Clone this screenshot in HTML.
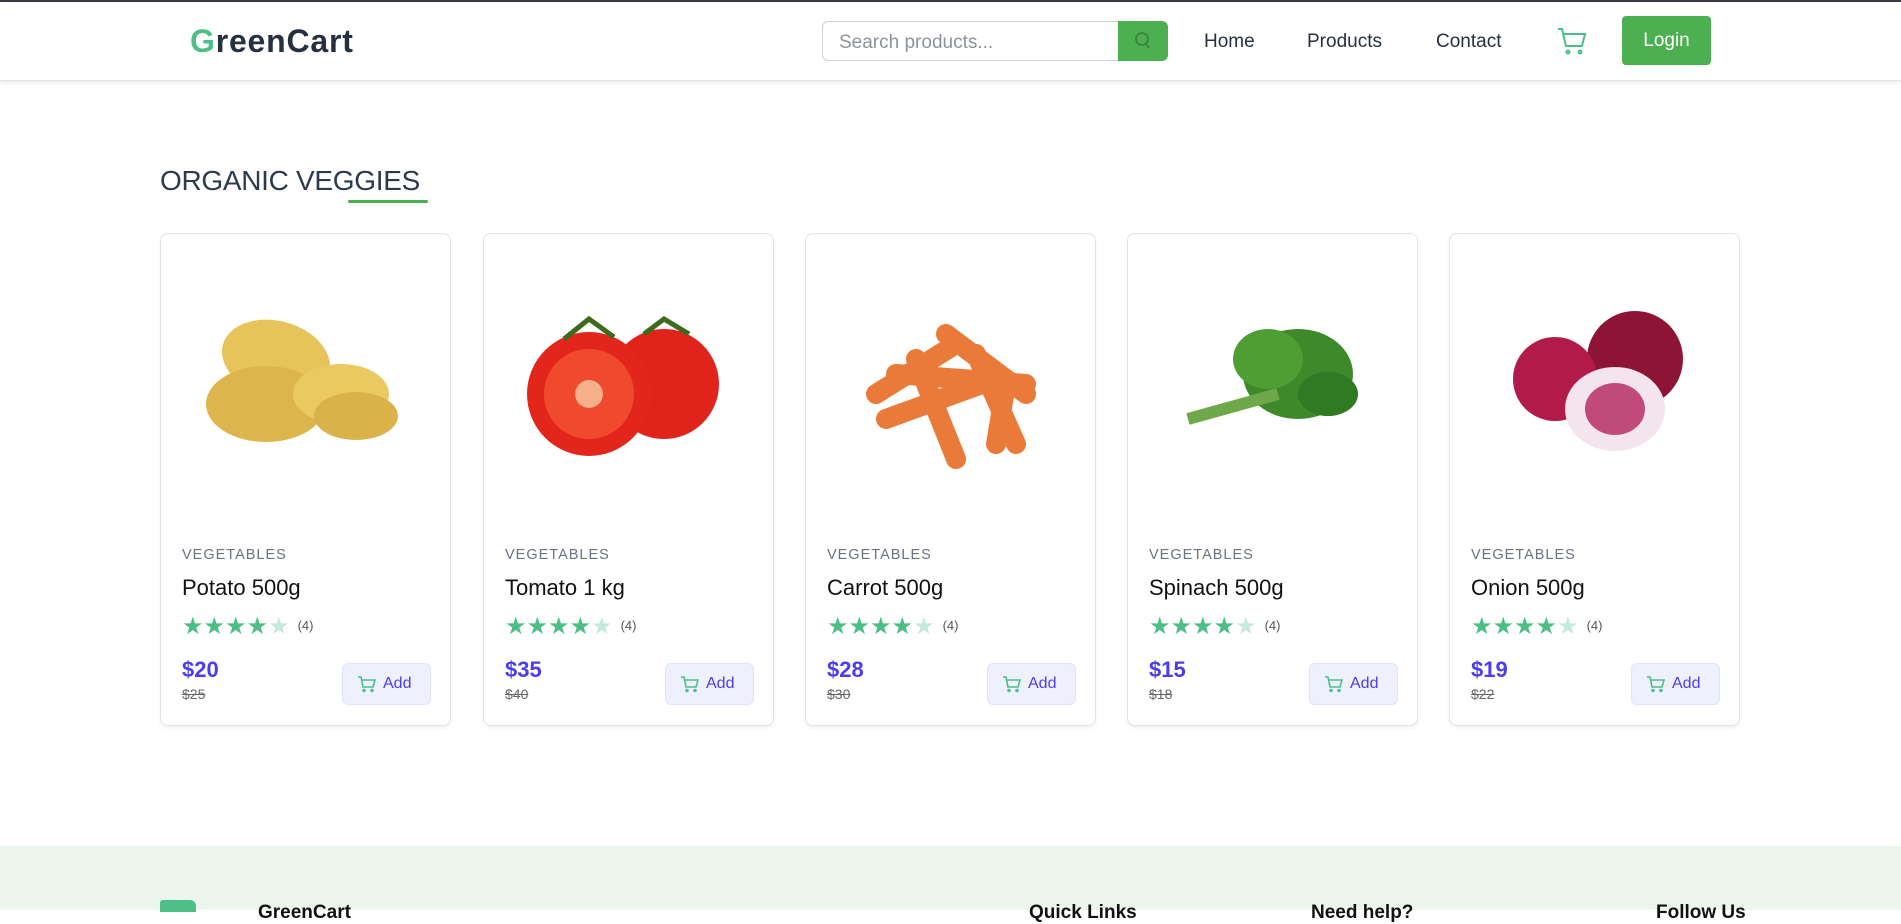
<!DOCTYPE html>
<html><head><meta charset="utf-8"><style>
*{margin:0;padding:0;box-sizing:border-box}
body{width:1901px;height:910px;overflow:hidden;background:#fff;font-family:"Liberation Sans",sans-serif;position:relative}
.top{position:absolute;top:0;left:0;right:0;height:2px;background:#3a3f44}
header{position:absolute;top:2px;left:0;right:0;height:79px;background:#fff;box-shadow:0 2px 4px rgba(0,0,0,.08);border-bottom:1px solid #e6e6e6}
.logo{position:absolute;left:190px;top:21px;font-size:32px;font-weight:bold;color:#253040;letter-spacing:0.8px}
.search{position:absolute;left:822px;top:19px;width:296px;height:40px;border:1px solid #ccd2da;border-right:none;border-radius:6px 0 0 6px;font-size:19px;color:#8d939b;padding:10px 16px}
.sbtn{position:absolute;left:1118px;top:19px;width:50px;height:40px;background:#4caf50;border-radius:0 6px 6px 0}
.nav{position:absolute;top:29px;font-size:19px;color:#253040}
.login{position:absolute;left:1622px;top:14px;width:89px;height:49px;background:#4caf50;border-radius:4px;color:#fff;font-size:19px;text-align:center;line-height:49px}
h2{position:absolute;left:160px;top:165px;font-size:28px;font-weight:normal;color:#2d3a4b;letter-spacing:-0.3px}
.ul{position:absolute;left:348px;top:200px;width:80px;height:3px;background:#4caf50;border-radius:2px}
.card{position:absolute;top:233px;width:291px;height:493px;border:1px solid #e3e3e6;border-radius:8px;box-shadow:0 2px 4px rgba(0,0,0,.06);background:#fff}
.img{position:absolute;left:20px;top:30px;width:250px;height:225px}
.cat{position:absolute;left:21px;top:313px;font-size:14.5px;color:#6b7280;letter-spacing:1px}
.name{position:absolute;left:21px;top:341px;font-size:22px;color:#111}
.stars{position:absolute;left:21px;top:378px;font-size:24px;color:#4dbf86;letter-spacing:0px}
.stars i{font-style:normal;color:#c4eadb}
.stars span{font-size:13px;color:#555;letter-spacing:0;margin-left:8px;vertical-align:4px}
.price{position:absolute;left:21px;top:423px;font-size:22px;font-weight:bold;color:#4c3cf0}
.old{position:absolute;left:21px;top:452px;font-size:14px;color:#666;text-decoration:line-through}
.add{position:absolute;left:181px;top:429px;width:89px;height:42px;background:#eef1fd;border:1px solid #dfe4fa;border-radius:6px;color:#4c3cf0;font-size:16px;line-height:40px;padding-left:40px}
.add svg{position:absolute;left:14px;top:11px}
footer{position:absolute;top:846px;left:0;right:0;height:64px;background:#ebf5ec}
.fh{position:absolute;top:56px;font-size:19px;font-weight:bold;color:#111}
</style></head><body>
<div class="top"></div>
<header>
<div class="logo"><span style="color:#4dbf86">G</span>reenCart</div>
<div class="search">Search products...</div>
<div class="sbtn"><svg width="50" height="40"><circle cx="24" cy="18" r="6" fill="none" stroke="#3b7d3e" stroke-width="1.6"/><line x1="28" y1="23" x2="31" y2="27" stroke="#3b7d3e" stroke-width="1.6"/></svg></div>
<div class="nav" style="left:1204px">Home</div>
<div class="nav" style="left:1307px">Products</div>
<div class="nav" style="left:1436px">Contact</div>
<svg style="position:absolute;left:1556px;top:24px" width="32" height="30" viewBox="0 0 32 30" fill="none" stroke="#4dbf86" stroke-width="2"><path d="M2 3h4l4 17h16l3-12H8"/><circle cx="12" cy="26" r="1.5"/><circle cx="24" cy="26" r="1.5"/></svg>
<div class="login">Login</div>
</header>
<h2>ORGANIC VEGGIES</h2><div class="ul"></div>

<div class="card" style="left:160px"><svg class="img" viewBox="0 0 250 225"><ellipse cx="95" cy="95" rx="55" ry="38" fill="#e6c45a" transform="rotate(15 95 95)"/><ellipse cx="85" cy="140" rx="60" ry="38" fill="#dcb64c"/><ellipse cx="160" cy="130" rx="48" ry="30" fill="#e9c960"/><ellipse cx="175" cy="152" rx="42" ry="24" fill="#d9b24a"/></svg>
<div class="cat">VEGETABLES</div><div class="name">Potato 500g</div><div class="stars">★★★★<i>★</i><span>(4)</span></div><div class="price">$20</div><div class="old">$25</div><div class="add"><svg width="20" height="18" viewBox="0 0 20 18" fill="none" stroke="#4dbf86" stroke-width="1.6"><path d="M1 2h3l2 10h10l2-7H5"/><circle cx="7" cy="15.5" r="1"/><circle cx="15" cy="15.5" r="1"/></svg>Add</div></div>

<div class="card" style="left:483px"><svg class="img" viewBox="0 0 250 225"><circle cx="160" cy="120" r="55" fill="#e0231b"/><circle cx="85" cy="130" r="62" fill="#e2261c"/><circle cx="85" cy="130" r="45" fill="#f04a2e"/><circle cx="85" cy="130" r="14" fill="#f7b08a"/><path d="M60 75l25 -20 25 18M140 70l20-15 25 15" stroke="#3d6b1e" stroke-width="5" fill="none"/></svg>
<div class="cat">VEGETABLES</div><div class="name">Tomato 1 kg</div><div class="stars">★★★★<i>★</i><span>(4)</span></div><div class="price">$35</div><div class="old">$40</div><div class="add"><svg width="20" height="18" viewBox="0 0 20 18" fill="none" stroke="#4dbf86" stroke-width="1.6"><path d="M1 2h3l2 10h10l2-7H5"/><circle cx="7" cy="15.5" r="1"/><circle cx="15" cy="15.5" r="1"/></svg>Add</div></div>

<div class="card" style="left:805px"><svg class="img" viewBox="0 0 250 225" stroke="#ea7a3a" stroke-width="20" stroke-linecap="round"><path d="M50 130l80 -50M60 155l110-40M90 95l40 100M150 90l40 90M120 70l80 60M180 120l-10 60M70 110l130 10"/></svg>
<div class="cat">VEGETABLES</div><div class="name">Carrot 500g</div><div class="stars">★★★★<i>★</i><span>(4)</span></div><div class="price">$28</div><div class="old">$30</div><div class="add"><svg width="20" height="18" viewBox="0 0 20 18" fill="none" stroke="#4dbf86" stroke-width="1.6"><path d="M1 2h3l2 10h10l2-7H5"/><circle cx="7" cy="15.5" r="1"/><circle cx="15" cy="15.5" r="1"/></svg>Add</div></div>

<div class="card" style="left:1127px"><svg class="img" viewBox="0 0 250 225"><ellipse cx="150" cy="110" rx="55" ry="45" fill="#3e8a2a"/><ellipse cx="120" cy="95" rx="35" ry="30" fill="#4f9e33"/><ellipse cx="180" cy="130" rx="30" ry="22" fill="#2f7a22"/><path d="M40 155l90-25" stroke="#6fa84a" stroke-width="12"/></svg>
<div class="cat">VEGETABLES</div><div class="name">Spinach 500g</div><div class="stars">★★★★<i>★</i><span>(4)</span></div><div class="price">$15</div><div class="old">$18</div><div class="add"><svg width="20" height="18" viewBox="0 0 20 18" fill="none" stroke="#4dbf86" stroke-width="1.6"><path d="M1 2h3l2 10h10l2-7H5"/><circle cx="7" cy="15.5" r="1"/><circle cx="15" cy="15.5" r="1"/></svg>Add</div></div>

<div class="card" style="left:1449px"><svg class="img" viewBox="0 0 250 225"><circle cx="165" cy="95" r="48" fill="#8d1435"/><circle cx="85" cy="115" r="42" fill="#b21a4a"/><ellipse cx="145" cy="145" rx="50" ry="42" fill="#f3e4ee"/><ellipse cx="145" cy="145" rx="30" ry="26" fill="#c04b7b"/></svg>
<div class="cat">VEGETABLES</div><div class="name">Onion 500g</div><div class="stars">★★★★<i>★</i><span>(4)</span></div><div class="price">$19</div><div class="old">$22</div><div class="add"><svg width="20" height="18" viewBox="0 0 20 18" fill="none" stroke="#4dbf86" stroke-width="1.6"><path d="M1 2h3l2 10h10l2-7H5"/><circle cx="7" cy="15.5" r="1"/><circle cx="15" cy="15.5" r="1"/></svg>Add</div></div>

<footer>
<div style="position:absolute;left:160px;top:54px;width:36px;height:12px;background:#4dbf86;border-radius:3px 6px 0 0"></div>
<div class="fh" style="left:258px">GreenCart</div>
<div class="fh" style="left:1029px">Quick Links</div>
<div class="fh" style="left:1311px">Need help?</div>
<div class="fh" style="left:1656px">Follow Us</div>
</footer>
</body></html>
